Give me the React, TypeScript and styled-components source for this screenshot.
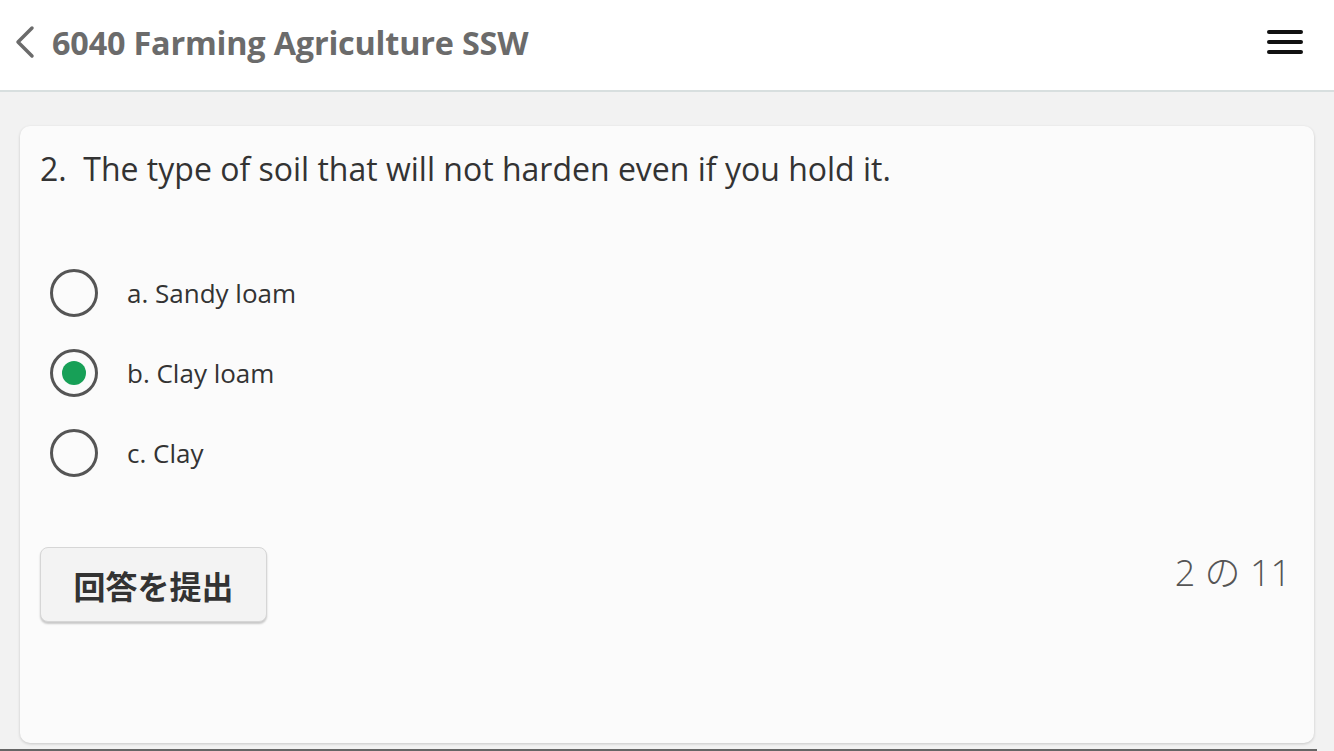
import React, { useState } from "react";
import styled, { createGlobalStyle } from "styled-components";

const GlobalStyle = createGlobalStyle`
  html, body {
    margin: 0;
    padding: 0;
    background: #f2f2f2;
    font-family: "Open Sans", "Noto Sans CJK JP", sans-serif;
  }
  * { box-sizing: border-box; }
`;

const Page = styled.div`
  width: 1334px;
  height: 751px;
  display: flex;
  flex-direction: column;
  background: #f2f2f2;
  overflow: hidden;
`;

const Header = styled.header`
  height: 92px;
  flex: none;
  background: #ffffff;
  border-bottom: 2px solid #d8dfdf;
  display: flex;
  align-items: center;
  padding: 0 31px 6px 13px;
`;

const BackButton = styled.button`
  border: none;
  background: none;
  padding: 0;
  width: 28px;
  height: 36px;
  display: flex;
  align-items: center;
  color: #6b6b6b;
  margin-right: 11px;
`;

const Title = styled.h1`
  margin: 0;
  flex: 1;
  font-size: 32.4px;
  font-weight: 700;
  color: #6b6b6b;
  letter-spacing: -0.2px;
`;

const Burger = styled.button`
  border: none;
  background: none;
  padding: 0;
  width: 36px;
  display: flex;
  flex-direction: column;
  gap: 6px;
`;

const BurgerLine = styled.span`
  display: block;
  height: 4px;
  border-radius: 2px;
  background: #111;
`;

const Main = styled.main`
  flex: 1;
  padding: 34px 20px 6px 20px;
  display: flex;
`;

const Card = styled.section`
  flex: 1;
  background: #fbfbfb;
  border-radius: 10px;
  box-shadow: 0 1px 3px rgba(0, 0, 0, 0.18);
  padding: 22px 20px;
  display: flex;
  flex-direction: column;
`;

const Question = styled.p`
  margin: 0 0 79px;
  font-size: 32px;
  line-height: 42px;
  color: #333;
  white-space: pre;
`;

const Options = styled.div`
  display: flex;
  flex-direction: column;
  gap: 32px;
  padding-left: 10px;
`;

const OptionRow = styled.label`
  display: flex;
  align-items: center;
  gap: 29px;
  cursor: pointer;
`;

const Radio = styled.span<{ $checked: boolean }>`
  width: 48px;
  height: 48px;
  border-radius: 50%;
  border: 3px solid #555;
  display: flex;
  align-items: center;
  justify-content: center;
  &::after {
    content: "";
    width: 24px;
    height: 24px;
    border-radius: 50%;
    background: #17a057;
    display: ${(p) => (p.$checked ? "block" : "none")};
  }
`;

const OptionLabel = styled.span`
  font-size: 26px;
  color: #333;
`;

const Footer = styled.div`
  margin-top: 70px;
  display: flex;
  justify-content: space-between;
  align-items: flex-start;
`;

const SubmitButton = styled.button`
  width: 227px;
  height: 75px;
  border-radius: 8px;
  border: 1px solid #d6d6d6;
  background: #f3f3f3;
  box-shadow: 0 2px 2px rgba(0, 0, 0, 0.2);
  font-family: "Noto Sans CJK JP", sans-serif;
  font-size: 32px;
  font-weight: 700;
  color: #333;
  cursor: pointer;
`;

const Counter = styled.div`
  font-size: 36px;
  font-weight: 300;
  color: #555;
  padding-right: 3px;
  line-height: 52px;
`;

const BottomBar = styled.div`
  height: 2px;
  width: 1317px;
  background: #666;
  flex: none;
`;

const options = ["a. Sandy loam", "b. Clay loam", "c. Clay"];

export default function App() {
  const [selected, setSelected] = useState(1);
  return (
    <Page>
      <GlobalStyle />
      <Header>
        <BackButton aria-label="back">
          <svg width="24" height="34" viewBox="0 0 24 34">
            <path d="M19 3 L5 17 L19 31" fill="none" stroke="#6b6b6b" strokeWidth="3.5" strokeLinecap="round" strokeLinejoin="round" />
          </svg>
        </BackButton>
        <Title>6040 Farming Agriculture SSW</Title>
        <Burger aria-label="menu">
          <BurgerLine />
          <BurgerLine />
          <BurgerLine />
        </Burger>
      </Header>
      <Main>
        <Card>
          <Question>{"2.  The type of soil that will not harden even if you hold it."}</Question>
          <Options>
            {options.map((o, i) => (
              <OptionRow key={o} onClick={() => setSelected(i)}>
                <Radio $checked={selected === i} />
                <OptionLabel>{o}</OptionLabel>
              </OptionRow>
            ))}
          </Options>
          <Footer>
            <SubmitButton>回答を提出</SubmitButton>
            <Counter>2 の 11</Counter>
          </Footer>
        </Card>
      </Main>
      <BottomBar />
    </Page>
  );
}
